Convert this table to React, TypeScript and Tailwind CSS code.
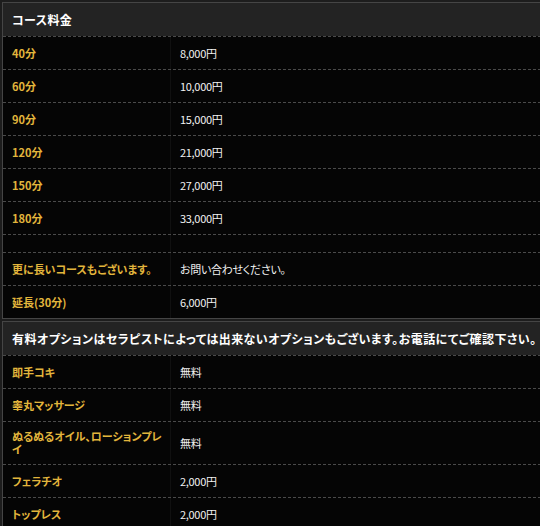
import React from "react";

type Row = { label: string; value: string; h?: string };

const courseRows: Row[] = [
  { label: "40分", value: "8,000円" },
  { label: "60分", value: "10,000円" },
  { label: "90分", value: "15,000円" },
  { label: "120分", value: "21,000円" },
  { label: "150分", value: "27,000円" },
  { label: "180分", value: "33,000円" },
  { label: "", value: "", h: "h-[18px]" },
  { label: "更に長いコースもございます。", value: "お問い合わせください。" },
  { label: "延長(30分)", value: "6,000円" },
];

const optionRows: Row[] = [
  { label: "即手コキ", value: "無料" },
  { label: "睾丸マッサージ", value: "無料" },
  { label: "ぬるぬるオイル、ローションプレイ", value: "無料", h: "h-[43px]" },
  { label: "フェラチオ", value: "2,000円" },
  { label: "トップレス", value: "2,000円" },
];

const PriceTable = ({ title, rows }: { title: string; rows: Row[] }) => (
  <div className="ml-[2px] w-[545px] border border-[#454545] bg-[#050505]">
    {/* Header */}
    <div className="h-[33px] flex items-center px-[9px] bg-[#232323] text-[12px] font-bold text-white whitespace-nowrap tracking-[0.45px] [font-feature-settings:'palt']">
      {title}
    </div>

    {/* Rows */}
    {rows.map((row, i) => (
      <div
        key={i}
        className={`flex border-t border-dashed border-[#4a4a4a] ${row.h ?? "h-[33px]"}`}
      >
        <div className="w-[168px] shrink-0 flex items-center pl-[9px] pr-[8px] border-r border-[#101010] text-[11px] leading-[13px] font-bold text-[#e2b53c] [font-feature-settings:'palt']">
          {row.label}
        </div>
        <div className="flex-1 flex items-center pl-[9px] text-[11px] text-[#f2f2f2] tracking-[-0.3px] [font-feature-settings:'palt']">
          {row.value}
        </div>
      </div>
    ))}
  </div>
);

export default function App() {
  return (
    <div
      className="w-[540px] h-[526px] overflow-hidden bg-[#1d1d1d] pt-[2px]"
      style={{ fontFamily: "'Noto Sans CJK JP', 'Noto Sans', sans-serif" }}
    >
      <PriceTable title="コース料金" rows={courseRows} />
      <div className="mt-[2px]">
        <PriceTable
          title="有料オプションはセラピストによっては出来ないオプションもございます。お電話にてご確認下さい。"
          rows={optionRows}
        />
      </div>
    </div>
  );
}
